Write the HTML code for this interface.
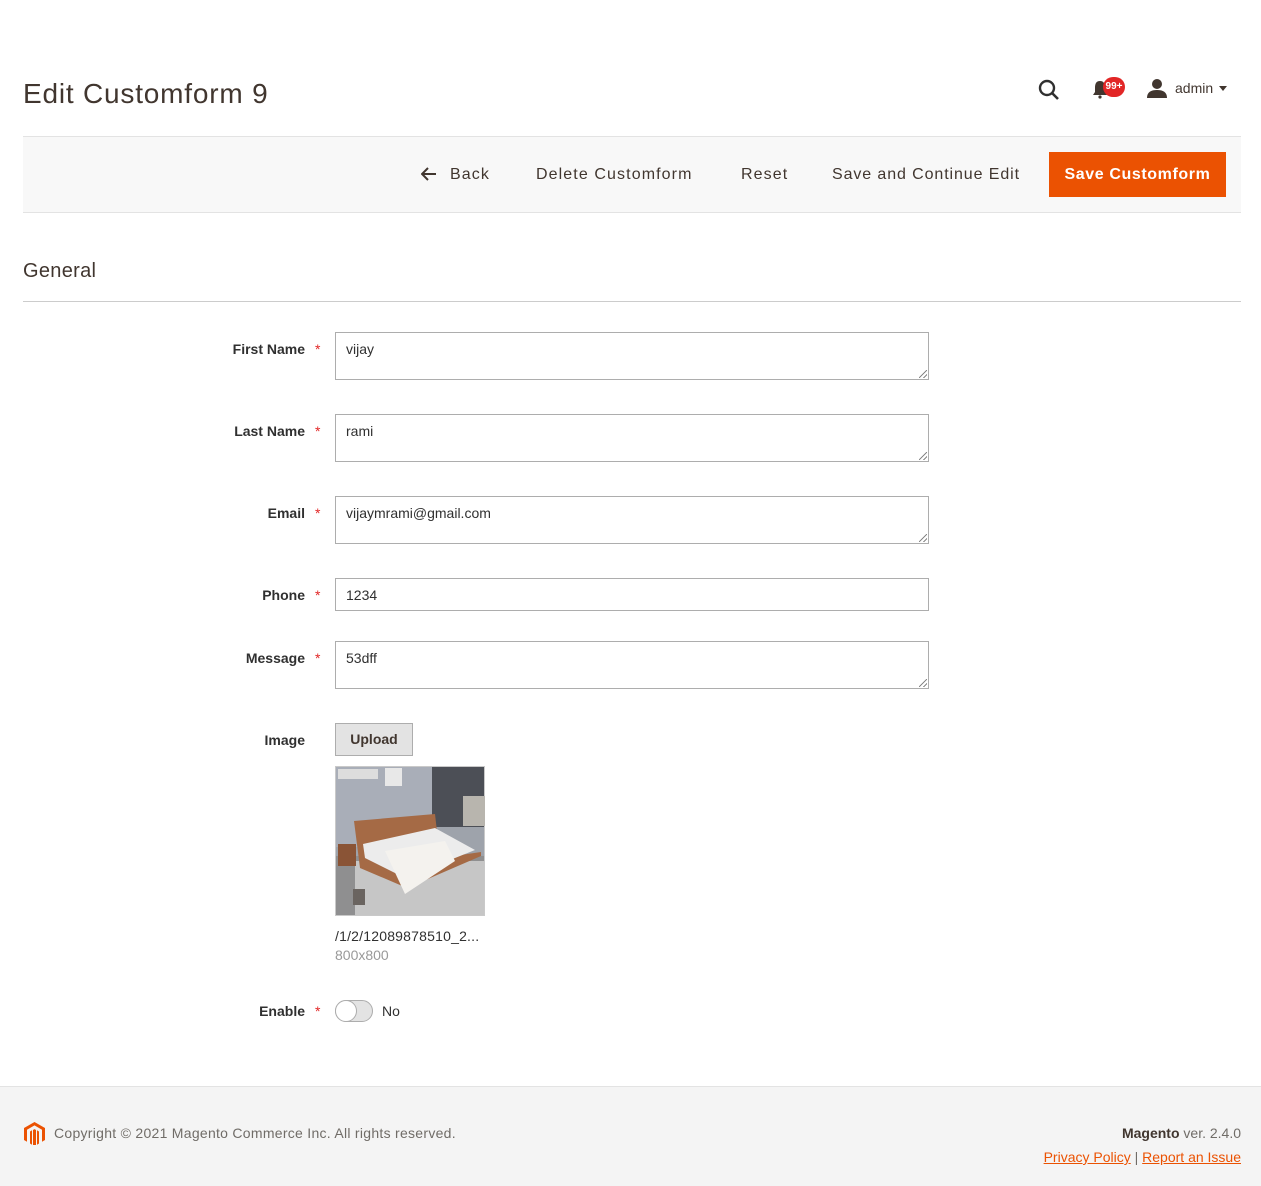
<!DOCTYPE html>
<html><head><meta charset="utf-8"><style>
*{box-sizing:border-box;margin:0;padding:0}
body{width:1261px;height:1186px;position:relative;background:#fff;font-family:"Liberation Sans",sans-serif;color:#303030;overflow:hidden}
.a{position:absolute}
.title{left:23px;top:78px;font-size:28px;color:#41362f;letter-spacing:.8px}
.bar{left:23px;top:136px;width:1218px;height:77px;background:#f8f8f8;border-top:1px solid #e3e3e3;border-bottom:1px solid #e3e3e3}
.btn{top:166px;font-size:16px;color:#41362f;letter-spacing:1.1px}
.save{left:1049px;top:152px;width:177px;height:45px;background:#eb5202;color:#fff;font-weight:bold;font-size:16px;text-align:center;line-height:45px;letter-spacing:.3px}
.gen{left:23px;top:260px;font-size:20px;color:#41362f;letter-spacing:.3px}
.hr{left:23px;top:301px;width:1218px;height:1px;background:#ccc}
.lbl{right:956px;font-size:14px;font-weight:bold;color:#303030;text-align:right}
.star{left:315px;color:#e22626;font-size:14px}
.inp{left:335px;width:594px;border:1px solid #adadad;font-size:14px;padding:8px 10px;color:#303030}
.grip{position:absolute;right:1px;bottom:1px;width:8px;height:8px;background:linear-gradient(135deg,transparent 45%,#888 45%,#888 55%,transparent 55%,transparent 72%,#888 72%,#888 82%,transparent 82%)}
.foot{left:0;top:1086px;width:1261px;height:100px;background:#f4f4f4;border-top:1px solid #e3e3e3}
a{color:#eb5202;text-decoration:underline}
</style></head><body>
<div class="a title">Edit Customform 9</div>
<svg class="a" style="left:1037px;top:78px" width="24" height="24" viewBox="0 0 24 24"><circle cx="10" cy="10" r="7" fill="none" stroke="#303030" stroke-width="2.4"/><line x1="15" y1="15" x2="21" y2="21" stroke="#303030" stroke-width="2.6"/></svg>
<svg class="a" style="left:1092px;top:80px" width="16" height="20" viewBox="0 0 16 20"><path d="M8 1c-4 0-5 3-5 7v4l-2 3h14l-2-3V8c0-4-1-7-5-7z" fill="#41362f"/><circle cx="8" cy="17" r="1.6" fill="#41362f"/></svg>
<div class="a" style="left:1103px;top:77px;width:22px;height:20px;border-radius:10px;background:#e22626;color:#fff;font-size:10px;font-weight:bold;text-align:center;line-height:20px">99+</div>
<svg class="a" style="left:1146px;top:78px" width="22" height="20" viewBox="0 0 22 20"><circle cx="11" cy="6" r="5" fill="#41362f"/><path d="M1 20c0-6 4-8 10-8s10 2 10 8z" fill="#41362f"/></svg>
<div class="a" style="left:1175px;top:80px;font-size:14px;color:#41362f">admin</div>
<div class="a" style="left:1219px;top:86px;border:4px solid transparent;border-top:5px solid #41362f"></div>
<div class="a bar"></div>
<svg class="a" style="left:421px;top:167px" width="16" height="14" viewBox="0 0 16 14"><path d="M15 7H2M7 1L1 7l6 6" fill="none" stroke="#41362f" stroke-width="2"/></svg>
<div class="a btn" style="left:450px">Back</div>
<div class="a btn" style="left:536px">Delete Customform</div>
<div class="a btn" style="left:741px">Reset</div>
<div class="a btn" style="left:832px;letter-spacing:.9px">Save and Continue Edit</div>
<div class="a save" style="letter-spacing:.6px">Save Customform</div>
<div class="a gen">General</div>
<div class="a hr"></div>

<div class="a lbl" style="top:341px">First Name</div><div class="a star" style="top:341px">*</div>
<div class="a inp" style="top:332px;height:48px">vijay<span class="grip"></span></div>
<div class="a lbl" style="top:423px">Last Name</div><div class="a star" style="top:423px">*</div>
<div class="a inp" style="top:414px;height:48px">rami<span class="grip"></span></div>
<div class="a lbl" style="top:505px">Email</div><div class="a star" style="top:505px">*</div>
<div class="a inp" style="top:496px;height:48px">vijaymrami@gmail.com<span class="grip"></span></div>
<div class="a lbl" style="top:587px">Phone</div><div class="a star" style="top:587px">*</div>
<div class="a inp" style="top:578px;height:33px;padding-top:8px">1234</div>
<div class="a lbl" style="top:650px">Message</div><div class="a star" style="top:650px">*</div>
<div class="a inp" style="top:641px;height:48px">53dff<span class="grip"></span></div>

<div class="a lbl" style="top:732px">Image</div>
<div class="a" style="left:335px;top:723px;width:78px;height:33px;background:#e3e3e3;border:1px solid #adadad;font-size:14px;font-weight:bold;color:#41362f;text-align:center;line-height:31px">Upload</div>
<svg class="a" style="left:335px;top:766px" width="150" height="150" viewBox="0 0 150 150">
<rect width="150" height="150" fill="#c9c9c9"/><rect x="1" y="1" width="148" height="148" fill="#9ea3ab"/>
<rect x="1" y="1" width="96" height="80" fill="#a9aeb8"/><rect x="97" y="1" width="52" height="60" fill="#4c4f56"/>
<rect x="1" y="90" width="148" height="59" fill="#8f8f90"/><rect x="20" y="95" width="129" height="54" fill="#c6c6c6"/>
<rect x="3" y="3" width="40" height="10" fill="#ddd"/><rect x="50" y="2" width="17" height="18" fill="#e8e8e8"/>
<rect x="128" y="30" width="22" height="30" fill="#b8b5ae"/>
<path d="M19 55 L100 48 L105 92 L146 86 L146 90 L72 122 L25 102 Z" fill="#a56a45"/>
<path d="M28 78 L100 62 L140 84 L70 112 L30 92 Z" fill="#ececec"/>
<path d="M50 85 L110 75 L120 95 L70 128 Z" fill="#f4f2ee"/>
<rect x="3" y="78" width="18" height="22" fill="#8a5436"/>
<rect x="18" y="123" width="12" height="16" fill="#6a6460"/>
</svg>
<div class="a" style="left:335px;top:928px;font-size:14px;color:#303030;letter-spacing:.2px">/1/2/12089878510_2...</div>
<div class="a" style="left:335px;top:947px;font-size:14px;color:#999">800x800</div>

<div class="a lbl" style="top:1003px">Enable</div><div class="a star" style="top:1003px">*</div>
<div class="a" style="left:335px;top:1000px;width:38px;height:22px;border-radius:11px;background:#e3e3e3;border:1px solid #adadad"></div>
<div class="a" style="left:335px;top:1000px;width:22px;height:22px;border-radius:11px;background:#fff;border:1px solid #adadad"></div>
<div class="a" style="left:382px;top:1003px;font-size:14px;color:#303030">No</div>

<div class="a foot"></div>
<svg class="a" style="left:24px;top:1122px" width="21" height="23" viewBox="0 0 21 23"><path d="M10.5 0L0 6v12l3 1.7V7.7L10.5 3.4 18 7.7v12L21 18V6z M9 8v15l1.5.9L12 23V8l-1.5-.9z M6 9.5v12l2 1.2V8.3z M13 8.3v14.4l2-1.2v-12z" fill="#eb5202"/></svg>
<div class="a" style="left:54px;top:1125px;font-size:14px;color:#706c67;letter-spacing:.28px">Copyright © 2021 Magento Commerce Inc. All rights reserved.</div>
<div class="a" style="right:20px;top:1125px;font-size:14px;color:#706c67"><b style="color:#41362f">Magento</b> ver. 2.4.0</div>
<div class="a" style="right:20px;top:1149px;font-size:14px;color:#706c67"><a>Privacy Policy</a> | <a>Report an Issue</a></div>
</body></html>
